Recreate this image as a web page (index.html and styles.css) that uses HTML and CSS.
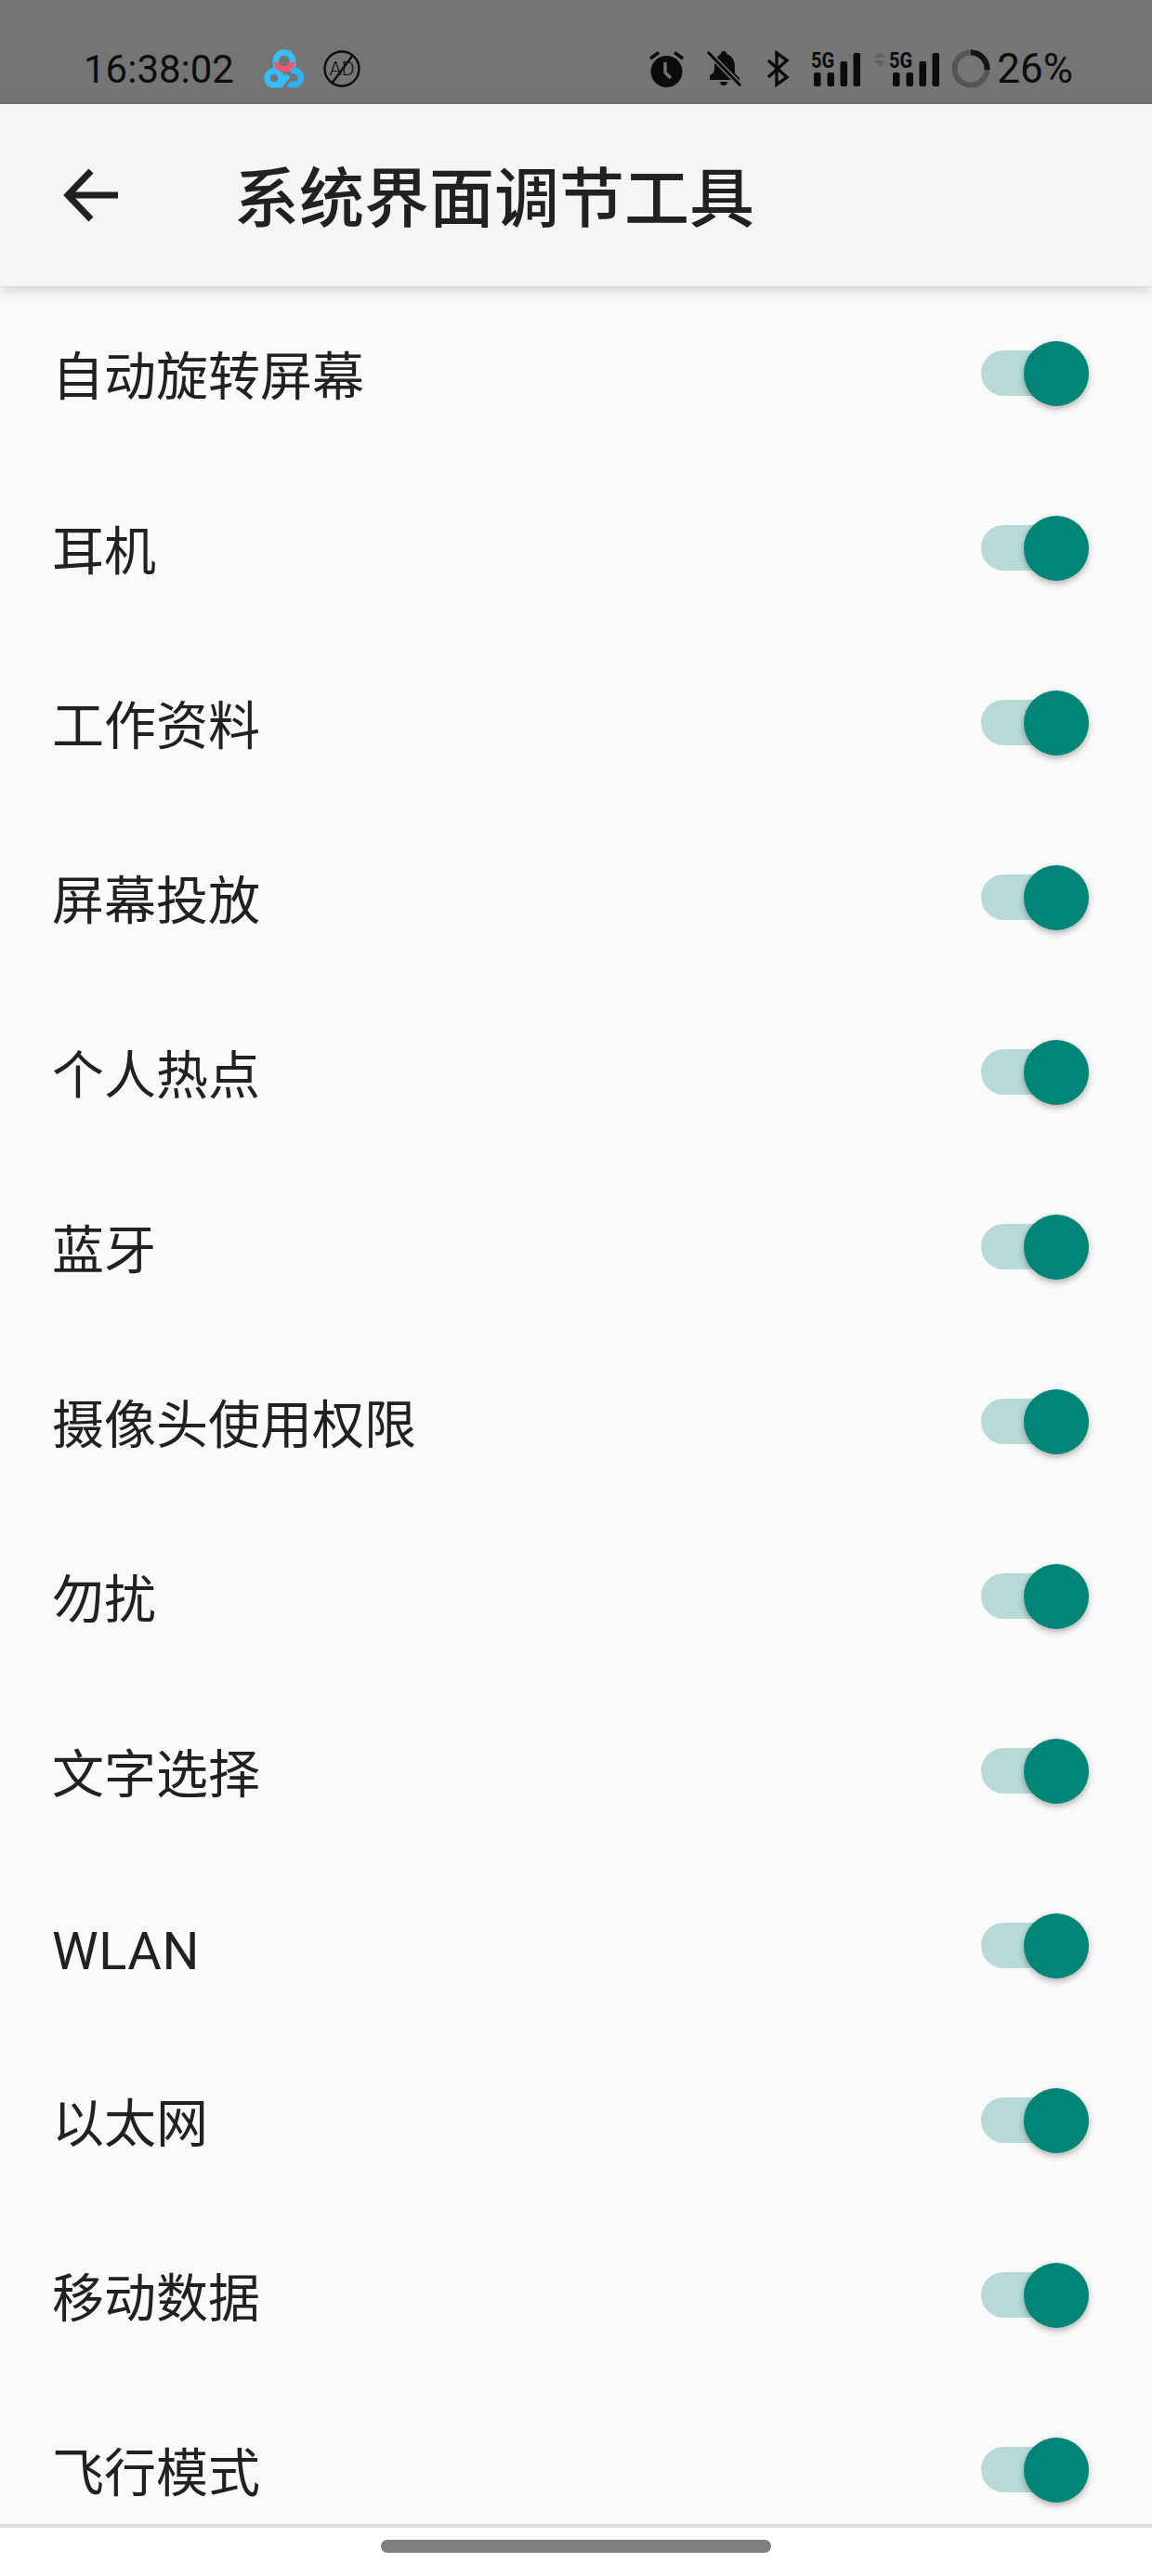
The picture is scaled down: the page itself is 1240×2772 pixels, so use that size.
FILE: index.html
```html
<html>
    <head>
        <title>系统界面调节工具</title>
        <meta name="viewport" content="width=device-width, initial-scale=1.0">
        <link rel="stylesheet" href="styles.css">
    </head>
    <body>
        <div class="status-bar">
            <div class="status-left">
                <span class="time">16:38:02</span>
                <svg class="icon-cloud" width="42" height="42" viewBox="0 0 42 42" fill="none" stroke-width="6.5">
                    <circle cx="10" cy="31" r="7.5" stroke="#35bdf8"/>
                    <path d="M26 36.5 C30 40 39 38 39 31 C39 25 33 21 28 24" stroke="#2fb0f5"/>
                    <path d="M11 38 L17 38 L25 28" stroke="#35bdf8"/>
                    <path d="M12.5 20 C10 10 14 3.5 21 3.5 C28 3.5 32 10 29.5 20" stroke="#35bdf8"/>
                    <path d="M13 14 C13 24 29 24 29 14" stroke="#f2566f"/>
                </svg>
                <svg class="icon-ad" width="40" height="40" viewBox="0 0 40 40" fill="none">
                    <circle cx="20" cy="20" r="18.5" stroke="#0d0d0d" stroke-width="2.4"/>
                    <line x1="32" y1="5" x2="9" y2="36" stroke="#0d0d0d" stroke-width="2.4"/>
                    <text x="20" y="27" text-anchor="middle" class="ad-text">AD</text>
                </svg>
            </div>
            <div class="status-right">
                <!-- alarm -->
                <svg class="icon-alarm" width="37" height="40" viewBox="0 0 37 40">
                    <circle cx="18.5" cy="23" r="17" fill="#0b0b0b"/>
                    <path d="M1 9 L10 2.5 M36 9 L27 2.5" stroke="#0b0b0b" stroke-width="3.6"/>
                    <path d="M17 13 V24 L23 30" fill="none" stroke="#757575" stroke-width="3.4"/>
                </svg>
                <!-- muted bell -->
                <svg class="icon-bell" width="37" height="40" viewBox="0 0 37 40">
                    <path d="M18 1 a3 3 0 0 1 3 3 C28 6 30 12 30 19 V25 L35 30 V32 H3 V27 C8 25 8 22 8 17 C8 11 11 6 15 4 a3 3 0 0 1 3 -3 Z M14 34 H22 a4 4 0 0 1 -8 0 Z" fill="#0b0b0b"/>
                    <line x1="2" y1="3" x2="36" y2="38" stroke="#757575" stroke-width="6"/>
                    <line x1="1" y1="2" x2="36" y2="38" stroke="#0b0b0b" stroke-width="3"/>
                </svg>
                <svg class="icon-bt" width="24" height="38" viewBox="0 0 24 38" fill="none">
                    <path d="M2 10 L22 28 L11 36 V2 L22 10 L2 28" stroke="#0b0b0b" stroke-width="3.4"/>
                </svg>
                <svg class="icon-signal" width="54" height="38" viewBox="0 0 54 38">
                    <text x="1" y="18" class="net-text" textLength="25" lengthAdjust="spacingAndGlyphs">5G</text>
                    <rect x="4" y="23" width="7.5" height="15" rx="2" fill="#0b0b0b"/>
                    <rect x="18.5" y="23" width="7.5" height="15" rx="2" fill="#0b0b0b"/>
                    <rect x="32.5" y="11" width="7.5" height="27" rx="2" fill="#0b0b0b"/>
                    <rect x="46.5" y="2" width="7.5" height="36" rx="2" fill="#0b0b0b"/>
                </svg>
                <svg class="icon-signal-data" width="70" height="38" viewBox="0 0 70 38">
                    <path d="M0 7 L6.5 1 L13 7 Z M0 10 L6.5 17 L13 10 Z" fill="#646464"/>
                    <text x="16" y="18" class="net-text" textLength="25" lengthAdjust="spacingAndGlyphs">5G</text>
                    <rect x="20" y="23" width="7.5" height="15" rx="2" fill="#0b0b0b"/>
                    <rect x="34.5" y="23" width="7.5" height="15" rx="2" fill="#0b0b0b"/>
                    <rect x="48.5" y="11" width="7.5" height="27" rx="2" fill="#0b0b0b"/>
                    <rect x="62.5" y="2" width="7.5" height="36" rx="2" fill="#0b0b0b"/>
                </svg>
                <svg class="icon-battery" width="42" height="42" viewBox="0 0 42 42" fill="none" stroke-width="6">
                    <circle cx="21" cy="21" r="17.5" stroke="#555555"/>
                    <path d="M21 3.5 A17.5 17.5 0 0 1 38.5 22" stroke="#141414"/>
                </svg>
                <span class="battery">26%</span>
            </div>
        </div>

        <div class="app-bar">
            <svg class="back" width="58" height="58" viewBox="0 0 58 58" fill="none">
                <path d="M28 3 L3 29 L28 55 M3 29 H57" stroke="#212121" stroke-width="7"/>
            </svg>
            <span class="title">系统界面调节工具</span>
        </div>

        <ul class="tile-list">
            <li class="tile"><span>自动旋转屏幕</span><div class="switch"><i class="track"></i><i class="thumb"></i></div></li>
            <li class="tile"><span>耳机</span><div class="switch"><i class="track"></i><i class="thumb"></i></div></li>
            <li class="tile"><span>工作资料</span><div class="switch"><i class="track"></i><i class="thumb"></i></div></li>
            <li class="tile"><span>屏幕投放</span><div class="switch"><i class="track"></i><i class="thumb"></i></div></li>
            <li class="tile"><span>个人热点</span><div class="switch"><i class="track"></i><i class="thumb"></i></div></li>
            <li class="tile"><span>蓝牙</span><div class="switch"><i class="track"></i><i class="thumb"></i></div></li>
            <li class="tile"><span>摄像头使用权限</span><div class="switch"><i class="track"></i><i class="thumb"></i></div></li>
            <li class="tile"><span>勿扰</span><div class="switch"><i class="track"></i><i class="thumb"></i></div></li>
            <li class="tile"><span>文字选择</span><div class="switch"><i class="track"></i><i class="thumb"></i></div></li>
            <li class="tile"><span class="latin">WLAN</span><div class="switch"><i class="track"></i><i class="thumb"></i></div></li>
            <li class="tile"><span>以太网</span><div class="switch"><i class="track"></i><i class="thumb"></i></div></li>
            <li class="tile"><span>移动数据</span><div class="switch"><i class="track"></i><i class="thumb"></i></div></li>
            <li class="tile"><span>飞行模式</span><div class="switch"><i class="track"></i><i class="thumb"></i></div></li>
        </ul>

        <div class="nav-bar">
            <div class="nav-pill"></div>
        </div>
    </body>
</html>
```

FILE: styles.css
```css
* {
    font-family: Roboto, "Noto Sans CJK SC", sans-serif;
    box-sizing: border-box;
}

html, body {
    margin: 0;
    padding: 0;
    width: 1240px;
    height: 2772px;
    overflow: hidden;
    background-color: #fafafa;
}

body {
    display: flex;
    flex-direction: column;
}

svg {
    overflow: visible;
}

.status-bar {
    height: 112px;
    padding: 36px 85px 0 90px;
    background-color: #757575;
    color: #0d0d0d;
    display: flex;
    align-items: center;
    justify-content: space-between;
    flex-shrink: 0;
}

.status-left, .status-right {
    display: flex;
    align-items: center;
}

.time {
    font-size: 42px;
    width: 195px;
}

.icon-ad {
    margin-left: 21px;
}

.ad-text {
    font-size: 21px;
    font-weight: 300;
    fill: #0d0d0d;
}

.net-text {
    font-size: 24px;
    font-weight: 700;
    fill: #0b0b0b;
}

.icon-bell {
    margin-left: 25px;
}

.icon-bt {
    margin-left: 27px;
}

.icon-signal {
    margin-left: 23px;
}

.icon-signal-data {
    margin-left: 15px;
}

.icon-battery {
    margin-left: 13px;
}

.battery {
    font-size: 44px;
    font-weight: 400;
    margin-left: 7px;
}

.app-bar {
    height: 196px;
    padding-left: 70px;
    background-color: #f5f5f5;
    display: flex;
    align-items: center;
    flex-shrink: 0;
    box-shadow: 0 3px 14px rgba(0, 0, 0, 0.2);
    position: relative;
    z-index: 1;
}

.title {
    font-size: 70px;
    font-weight: 500;
    color: #212121;
    margin-left: 124px;
    padding-bottom: 3px;
}

.tile-list {
    list-style: none;
    margin: 0;
    padding: 0;
    height: 2408px;
    overflow: hidden;
    flex-shrink: 0;
}

.tile {
    height: 188px;
    padding: 0 68px 0 56px;
    display: flex;
    align-items: center;
    justify-content: space-between;
    font-size: 56px;
    color: #212121;
}

.tile span {
    padding-bottom: 3px;
}

.tile .latin {
    padding: 12px 0 0;
    letter-spacing: 0.5px;
}

.switch {
    width: 116px;
    height: 70px;
    position: relative;
}

.track {
    position: absolute;
    left: 0;
    top: 10px;
    width: 104px;
    height: 49px;
    border-radius: 25px;
    background-color: #b8dad7;
}

.thumb {
    position: absolute;
    right: 0;
    top: 0;
    width: 70px;
    height: 70px;
    border-radius: 50%;
    background-color: #008577;
    box-shadow: 0 3px 7px rgba(0, 0, 0, 0.3);
}

.nav-bar {
    flex: 1;
    padding-top: 13px;
    border-top: 4px solid #dcdcdc;
    background-color: #ffffff;
    display: flex;
    justify-content: center;
    align-items: flex-start;
}

.nav-pill {
    width: 420px;
    height: 14px;
    border-radius: 7px;
    background-color: #808080;
}
```
